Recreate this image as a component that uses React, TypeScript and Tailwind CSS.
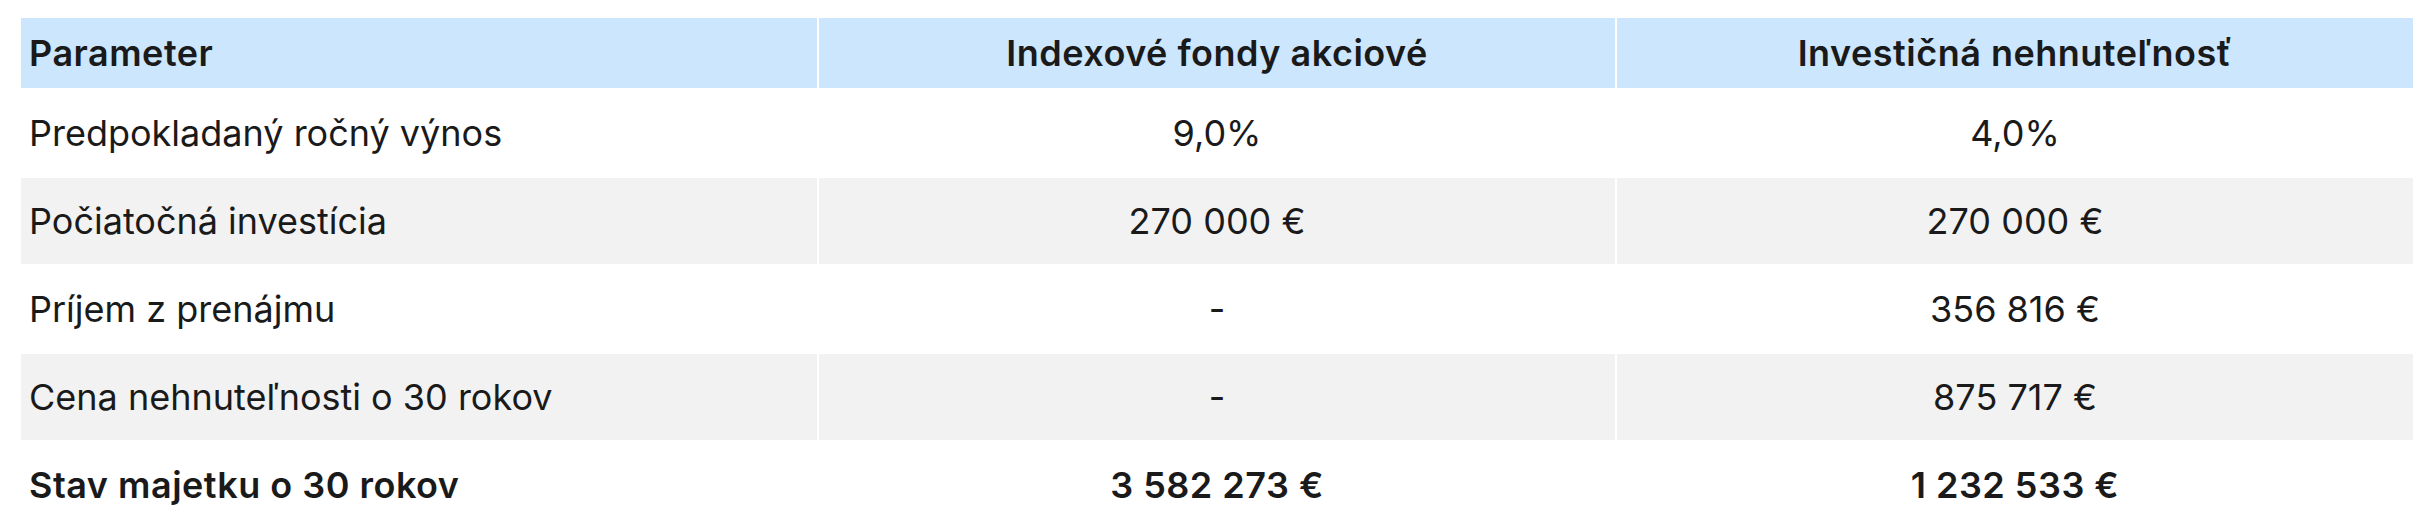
const HEADERS = ['Parameter', 'Indexové fondy akciové', 'Investičná nehnuteľnosť']

const ROWS: { label: string; a: string; b: string; bold?: boolean }[] = [
  { label: 'Predpokladaný ročný výnos', a: '9,0%', b: '4,0%' },
  { label: 'Počiatočná investícia', a: '270 000 €', b: '270 000 €' },
  { label: 'Príjem z prenájmu', a: '-', b: '356 816 €' },
  { label: 'Cena nehnuteľnosti o 30 rokov', a: '-', b: '875 717 €' },
  { label: 'Stav majetku o 30 rokov', a: '3 582 273 €', b: '1 232 533 €', bold: true },
]

export default function App() {
  return (
    <div className="min-h-[530px] w-[2432px] bg-white pt-[18px] pl-[21px] font-['Inter',sans-serif] text-[36px] leading-[54px] text-[#1a1a1a]">
      <div className="grid w-[2392px] grid-cols-3 gap-[2px]">
        {HEADERS.map((h, i) => (
          <div
            key={h}
            className={`bg-[#cce6fe] px-2 py-2 font-semibold tracking-[0.5px] ${i === 0 ? 'text-left' : 'text-center'}`}
          >
            {h}
          </div>
        ))}
        {ROWS.map((r, idx) => {
          const bg = idx % 2 === 1 ? 'bg-[#f2f2f2]' : 'bg-white'
          const weight = r.bold ? 'font-semibold tracking-[0.5px]' : 'font-normal'
          return [
            <div key={r.label + '-l'} className={`${bg} ${weight} px-2 py-4 text-left`}>
              {r.label}
            </div>,
            <div key={r.label + '-a'} className={`${bg} ${weight} px-2 py-4 text-center`}>
              {r.a}
            </div>,
            <div key={r.label + '-b'} className={`${bg} ${weight} px-2 py-4 text-center`}>
              {r.b}
            </div>,
          ]
        })}
      </div>
    </div>
  )
}
